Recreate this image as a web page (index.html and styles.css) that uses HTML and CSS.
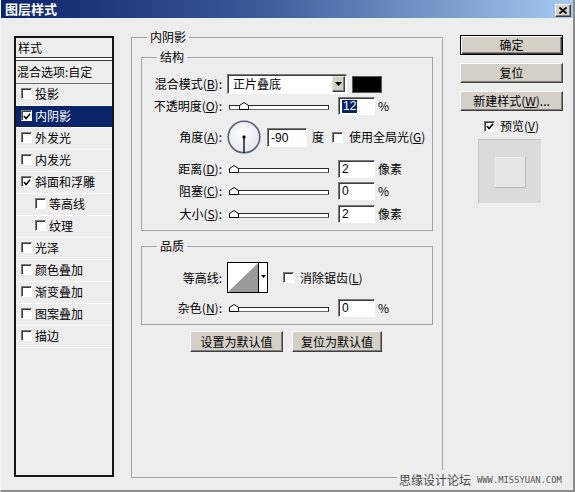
FILE: index.html
```html
<!DOCTYPE html>
<html lang="zh-CN">
<head>
<meta charset="utf-8">
<title>图层样式</title>
<link rel="stylesheet" href="styles.css">
</head>
<body>
<div class="window">
  <div class="titlebar">
    <span class="title">图层样式</span>
    <span class="close"><svg width="8" height="7" viewBox="0 0 8 7"><path d="M0.5 0.5 L7.5 6.5 M7.5 0.5 L0.5 6.5" stroke="#000" stroke-width="1.7"/></svg></span>
  </div>
  <div class="content">
    <div class="stylelist">
      <div class="sl-head">样式</div>
      <div class="sl-double"></div>
      <div class="sl-blend">混合选项:自定</div>
      <div class="sl-item"><span class="cb"></span>投影</div>
      <div class="sl-item sel"><span class="cb"><svg class="chk" width="9" height="9" viewBox="0 0 9 9"><path d="M1 4 L3.5 6.8 L8 1.5" fill="none" stroke="#000" stroke-width="1.6"/></svg></span>内阴影</div>
      <div class="sl-item"><span class="cb"></span>外发光</div>
      <div class="sl-item"><span class="cb"></span>内发光</div>
      <div class="sl-item"><span class="cb"><svg class="chk" width="9" height="9" viewBox="0 0 9 9"><path d="M1 4 L3.5 6.8 L8 1.5" fill="none" stroke="#000" stroke-width="1.6"/></svg></span>斜面和浮雕</div>
      <div class="sl-item sub"><span class="cb"></span>等高线</div>
      <div class="sl-item sub"><span class="cb"></span>纹理</div>
      <div class="sl-item"><span class="cb"></span>光泽</div>
      <div class="sl-item"><span class="cb"></span>颜色叠加</div>
      <div class="sl-item"><span class="cb"></span>渐变叠加</div>
      <div class="sl-item"><span class="cb"></span>图案叠加</div>
      <div class="sl-item"><span class="cb"></span>描边</div>
    </div>

    <fieldset class="group main">
      <legend>内阴影</legend>
      <fieldset class="group sub struct">
        <legend>结构</legend>
        <div class="row r-blend">
          <span class="lbl">混合模式(<u>B</u>):</span>
          <div class="select"><span class="sel-text">正片叠底</span><span class="sel-btn"><svg width="7" height="4" viewBox="0 0 7 4"><path d="M0 0 H7 L3.5 4 Z" fill="#000"/></svg></span></div>
          <span class="swatch"></span>
        </div>
        <div class="row r-opacity">
          <span class="lbl">不透明度(<u>O</u>):</span>
          <div class="slider"><span class="track"></span><svg class="thumb" style="left:10px" width="10" height="8" viewBox="0 0 10 8"><path d="M0.5 7.5 V3.5 L5 0.5 L9.5 3.5 V7.5 Z" fill="#fff" stroke="#000"/></svg></div>
          <span class="num"><span class="hl">12</span></span>
          <span class="unit">%</span>
        </div>
        <div class="row r-angle">
          <span class="lbl">角度(<u>A</u>):</span>
          <svg class="dial" width="34" height="34" viewBox="0 0 34 34">
            <defs><radialGradient id="dg" cx="0.45" cy="0.4" r="0.6"><stop offset="0" stop-color="#ffffff"/><stop offset="1" stop-color="#e4e6ec"/></radialGradient></defs>
            <circle cx="17" cy="17" r="15.8" fill="url(#dg)" stroke="#56607a" stroke-width="1.6"/>
            <line x1="17" y1="17" x2="17" y2="33" stroke="#000" stroke-width="1.3"/>
            <rect x="15.6" y="15.6" width="2.8" height="2.8" fill="#000"/>
          </svg>
          <span class="num angle">-90</span>
          <span class="unit deg">度</span>
          <span class="cb gl"></span>
          <span class="cb-text">使用全局光(<u>G</u>)</span>
        </div>
        <div class="row r-dist">
          <span class="lbl">距离(<u>D</u>):</span>
          <div class="slider"><span class="track"></span><svg class="thumb" style="left:0" width="10" height="8" viewBox="0 0 10 8"><path d="M0.5 7.5 V3.5 L5 0.5 L9.5 3.5 V7.5 Z" fill="#fff" stroke="#000"/></svg></div>
          <span class="num">2</span>
          <span class="unit">像素</span>
        </div>
        <div class="row r-choke">
          <span class="lbl">阻塞(<u>C</u>):</span>
          <div class="slider"><span class="track"></span><svg class="thumb" style="left:0" width="10" height="8" viewBox="0 0 10 8"><path d="M0.5 7.5 V3.5 L5 0.5 L9.5 3.5 V7.5 Z" fill="#fff" stroke="#000"/></svg></div>
          <span class="num">0</span>
          <span class="unit">%</span>
        </div>
        <div class="row r-size">
          <span class="lbl">大小(<u>S</u>):</span>
          <div class="slider"><span class="track"></span><svg class="thumb" style="left:0" width="10" height="8" viewBox="0 0 10 8"><path d="M0.5 7.5 V3.5 L5 0.5 L9.5 3.5 V7.5 Z" fill="#fff" stroke="#000"/></svg></div>
          <span class="num">2</span>
          <span class="unit">像素</span>
        </div>
      </fieldset>

      <fieldset class="group sub quality">
        <legend>品质</legend>
        <div class="row r-contour">
          <span class="lbl">等高线:</span>
          <div class="contour">
            <svg class="curve" width="30" height="29" viewBox="0 0 30 29"><path d="M0 29 L30 0 V29 Z" fill="#9a9a9a"/></svg>
            <span class="c-arrow"><svg width="5" height="3" viewBox="0 0 5 3"><path d="M0 0 H5 L2.5 3 Z" fill="#000"/></svg></span>
          </div>
          <span class="cb aa"></span>
          <span class="cb-text">消除锯齿(<u>L</u>)</span>
        </div>
        <div class="row r-noise">
          <span class="lbl">杂色(<u>N</u>):</span>
          <div class="slider"><span class="track"></span><svg class="thumb" style="left:0" width="10" height="8" viewBox="0 0 10 8"><path d="M0.5 7.5 V3.5 L5 0.5 L9.5 3.5 V7.5 Z" fill="#fff" stroke="#000"/></svg></div>
          <span class="num">0</span>
          <span class="unit">%</span>
        </div>
      </fieldset>

      <div class="defaults">
        <span class="btn wide">设置为默认值</span>
        <span class="btn wide2">复位为默认值</span>
      </div>
    </fieldset>

    <div class="side">
      <span class="btn default">确定</span>
      <span class="btn">复位</span>
      <span class="btn">新建样式(<u>W</u>)...</span>
      <div class="preview-check">
        <span class="cb"><svg class="chk" width="9" height="9" viewBox="0 0 9 9"><path d="M1 4 L3.5 6.8 L8 1.5" fill="none" stroke="#000" stroke-width="1.6"/></svg></span>
        <span class="cb-text">预览(<u>V</u>)</span>
      </div>
      <div class="preview"><div class="preview-inner"></div></div>
    </div>
  </div>
  <div class="watermark"><span class="wm-cn">思缘设计论坛</span><span class="wm-en">WWW.MISSYUAN.COM</span></div>
</div>
</body>
</html>
```
FILE: styles.css
```css
html, body {
  margin: 0;
  padding: 0;
}
body {
  font-family: "Noto Sans CJK SC", "Liberation Sans", sans-serif;
  font-size: 12px;
  line-height: 12px;
  color: #000;
  background: #ededed;
}
u { text-decoration: underline; text-underline-offset: 1px; }

.window {
  position: relative;
  width: 575px;
  height: 492px;
  box-sizing: border-box;
  background: #ededed;
  border-left: 1px solid #f8f8f8;
  border-right: 2px solid #8c8c8c;
  border-bottom: 2px solid #8c8c8c;
  overflow: hidden;
}

.titlebar {
  height: 18px;
  display: flex;
  justify-content: space-between;
  align-items: flex-start;
  padding: 0 2px 0 4px;
  background: linear-gradient(90deg, #0a246a 0%, #3a5a98 45%, #a6caf0 100%);
}
.title {
  color: #fff;
  font-weight: bold;
  font-size: 13px;
  line-height: 18px;
}
.close {
  margin-top: 4px;
  width: 16px;
  height: 13px;
  box-sizing: border-box;
  background: #d4d0c8;
  border: 1px solid;
  border-color: #fff #404040 #404040 #fff;
  box-shadow: inset -1px -1px 0 #808080;
  display: flex;
  align-items: center;
  justify-content: center;
}

.content {
  display: flex;
  align-items: flex-start;
  padding-left: 13px;
}

/* left style list */
.stylelist {
  margin-top: 18px;
  width: 100px;
  height: 441px;
  box-sizing: border-box;
  border: 2px solid #151515;
  flex: none;
}
.sl-head {
  height: 19px;
  line-height: 19px;
  padding-left: 2px;
}
.sl-double {
  height: 2px;
  border-top: 1px solid #3a3a3a;
  border-bottom: 1px solid #3a3a3a;
  background: #fff;
}
.sl-blend {
  height: 22px;
  line-height: 21px;
  padding-left: 1px;
  border-bottom: 1px solid #6a6a6a;
}
.sl-item {
  height: 21px;
  box-sizing: border-box;
  height: 22px;
  border-bottom: 1px solid #fff;
  display: flex;
  align-items: center;
  padding-left: 5px;
  padding-bottom: 2px;
}
.sl-item.sub { padding-left: 19px; }
.sl-item.sel {
  background: #0a246a;
  color: #fff;
}

.cb {
  width: 11px;
  height: 11px;
  box-sizing: border-box;
  flex: none;
  background: #fff;
  border: 1px solid;
  border-color: #7c7c7c #fff #fff #7c7c7c;
  box-shadow: inset 1px 1px 0 #3c3c3c;
  margin-right: 3px;
  display: flex;
  align-items: center;
  justify-content: center;
  position: relative;
}
.chk { display: block; margin: 1px 0 0 1px; }

/* group boxes */
fieldset.group {
  margin: 0;
  border: 1px solid #a4a4a4;
  min-width: 0;
}
fieldset.group > legend {
  padding: 0 3px;
  margin-left: 6px;
  line-height: 12px;
}
fieldset.main {
  flex: none;
  margin-top: 13px;
  margin-left: 17px;
  width: 312px;
  height: 447px;
  box-sizing: border-box;
  padding: 0 9px;
}
fieldset.sub {
  padding: 0 0 7px 0;
}
fieldset.sub > legend { margin-left: 15px; }
fieldset.struct { margin-top: 8px; }
fieldset.quality { margin-top: 9px; }

.row {
  display: flex;
  align-items: center;
}
.lbl {
  width: 80px;
  flex: none;
  text-align: right;
  margin-right: 5px;
}
.r-blend { margin-top: 11px; height: 20px; }
.r-opacity { margin-top: 3px; height: 18px; }
.r-angle { margin-top: 5px; height: 34px; }
.r-dist { margin-top: 6px; height: 18px; }
.r-choke { margin-top: 4px; height: 18px; }
.r-size { margin-top: 5px; height: 18px; }
.r-contour { margin-top: 10px; height: 31px; }
.r-noise { margin-top: 6px; height: 18px; }

.select {
  width: 120px;
  height: 20px;
  box-sizing: border-box;
  display: flex;
  background: #fff;
  border: 1px solid;
  border-color: #7c7c7c #fff #fff #7c7c7c;
  box-shadow: inset 1px 1px 0 #3c3c3c;
  padding: 1px 1px 1px 1px;
}
.sel-text {
  flex: 1;
  padding-left: 4px;
  line-height: 16px;
}
.sel-btn {
  width: 13px;
  box-sizing: border-box;
  background: #d4d0c8;
  border: 1px solid;
  border-color: #e8e8e8 #404040 #404040 #e8e8e8;
  box-shadow: inset -1px -1px 0 #808080;
  display: flex;
  align-items: center;
  justify-content: center;
}
.swatch {
  width: 30px;
  height: 17px;
  margin-left: 5px;
  box-sizing: border-box;
  background: #000;
  border: 1px solid #5a5a5a;
}

.slider {
  position: relative;
  width: 100px;
  height: 18px;
  margin-left: 2px;
  flex: none;
}
.track {
  display: block;
  margin-top: 8px;
  height: 5px;
  box-sizing: border-box;
  background: #fff;
  border: 1px solid #2a2a2a;
  border-bottom-color: #6a6a6a;
  border-radius: 1px;
}
.thumb {
  position: absolute;
  top: 5px;
  display: block;
}

.num {
  width: 37px;
  height: 18px;
  box-sizing: border-box;
  margin-left: 9px;
  flex: none;
  background: #fff;
  border: 1px solid;
  border-color: #7c7c7c #fff #fff #7c7c7c;
  box-shadow: inset 1px 1px 0 #3c3c3c;
  font-family: "Liberation Sans", "Noto Sans CJK SC", sans-serif;
  font-size: 12px;
  line-height: 15px;
  padding: 1px 0 0 3px;
}
.num.angle {
  width: 40px;
  height: 19px;
  margin-left: 6px;
  padding-top: 2px;
}
.hl {
  display: inline-block;
  background: #0a246a;
  color: #fff;
  line-height: 13px;
  padding: 0 1px;
}
.unit { margin-left: 3px; }
.unit.deg { margin-left: 5px; }
.cb.gl { margin-left: 8px; margin-right: 0; }
.cb.aa { margin-left: 15px; margin-right: 0; }
.cb-text { margin-left: 6px; }

.dial { display: block; flex: none; }

.contour {
  width: 41px;
  height: 31px;
  box-sizing: border-box;
  border: 1px solid #000;
  background: #fff;
  display: flex;
  flex: none;
}
.curve { display: block; }
.c-arrow {
  flex: 1;
  border-left: 1px solid #000;
  display: flex;
  align-items: center;
  justify-content: center;
  padding-bottom: 2px;
}

.defaults {
  margin-top: 6px;
  display: flex;
  justify-content: center;
  gap: 9px;
  padding-right: 2px;
}

.btn {
  height: 20px;
  box-sizing: border-box;
  background: #d4d0c8;
  border: 1px solid;
  border-color: #fff #404040 #404040 #fff;
  box-shadow: inset -1px -1px 0 #808080;
  display: flex;
  align-items: center;
  justify-content: center;
  white-space: nowrap;
}
.btn.wide { width: 93px; height: 21px; }
.btn.wide2 { width: 90px; height: 21px; }
.btn.default {
  border: 1px solid #000;
  box-shadow: inset 1px 1px 0 #fff, inset -1px -1px 0 #404040, inset -2px -2px 0 #808080;
}

.side {
  flex: none;
  width: 103px;
  margin-left: 17px;
  margin-top: 17px;
  display: flex;
  flex-direction: column;
  gap: 8px;
}
.preview-check {
  margin-top: 1px;
  display: flex;
  align-items: center;
  justify-content: center;
  height: 12px;
}
.preview-check .cb { margin-right: 0; }
.preview-check .cb-text { margin-left: 5px; }
.preview {
  align-self: center;
  margin-top: -1px;
  margin-left: -3px;
  width: 64px;
  height: 65px;
  box-sizing: border-box;
  background: #dbdbdb;
  border: 1px solid;
  border-color: #c4c4c4 #f2f2f2 #f2f2f2 #c4c4c4;
  display: flex;
  align-items: center;
  justify-content: center;
  padding-top: 2px;
}
.preview-inner {
  width: 31px;
  height: 31px;
  background: #e6e6e6;
  box-shadow: inset -1px -1px 0 #b8b8b8, inset 1px 1px 0 #ededed;
}

.watermark {
  position: absolute;
  right: 0;
  bottom: 0;
  width: 176px;
  height: 20px;
  background: #ededed;
  display: flex;
  align-items: center;
  gap: 6px;
  padding-left: 2px;
  box-sizing: border-box;
}
.wm-cn {
  color: #4a4a4a;
  font-size: 12px;
}
.wm-en {
  color: #555;
  font-family: "DejaVu Sans Mono", monospace;
  font-size: 8.8px;
  letter-spacing: 0;
}
```
